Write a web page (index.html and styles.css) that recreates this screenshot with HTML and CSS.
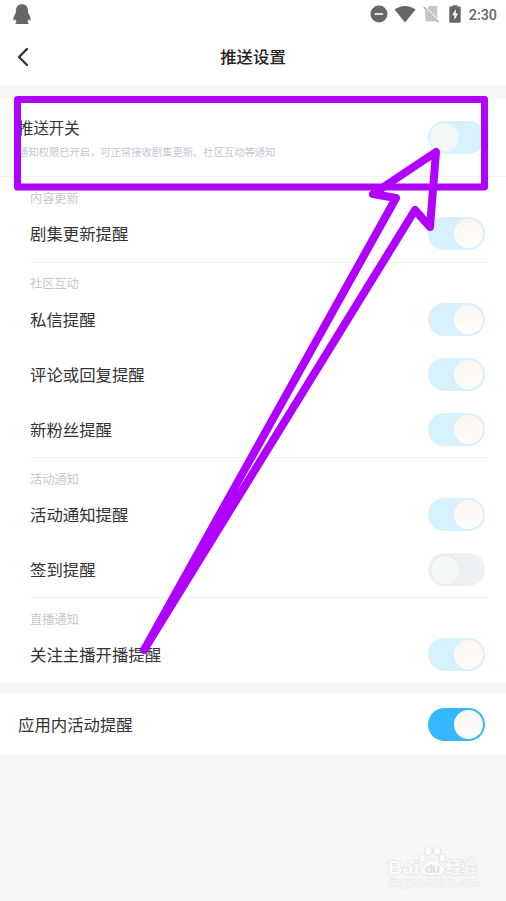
FILE: index.html
```
<!DOCTYPE html>
<html lang="zh-CN">

<head>
    <meta charset="UTF-8">
    <meta name="viewport" content="width=device-width, initial-scale=1.0">
    <title>推送设置</title>
    <link rel="stylesheet" href="styles.css">
</head>

<body>
    <header>
        <div class="status-bar">
            <svg class="penguin" width="18" height="21" viewBox="0 0 18 21">
                <path fill="#666" d="M9 .3C5.2.3 3 3 3 6.500c0 1.500-.2 2.200-.7 3.200C1.200 11.700.3 13.700.3 15.500c0 1 .5 1.400 1.200.3l.6-.8c.3 1.500.8 2.300 1.800 3.100-.9.300-1.500.7-1.500 1.300 0 .4 1 .6 2.600.6h8c1.600 0 2.600-.2 2.600-.6 0-.6-.6-1-1.500-1.300 1-.8 1.500-1.600 1.800-3.100l.6.800c.7 1.100 1.200.7 1.200-.3 0-1.800-.9-3.800-2-5.800-.5-1-.7-1.700-.7-3.200C15 3 12.800.3 9 .3z"/>
            </svg>
            <div class="status-icons">
                <svg width="18" height="18" viewBox="0 0 18 18">
                    <circle cx="9" cy="9" r="8.500" fill="#666"/>
                    <path stroke="#fff" stroke-width="1.600" d="M4.700 9h8.600"/>
                </svg>
                <svg class="wifi" width="22" height="18" viewBox="0 0 22 18">
                    <path fill="#666" d="M.5 4.500C6.500-.2 15.500-.2 21.500 4.500L11 17.500z"/>
                </svg>
                <svg class="sim" width="16" height="18" viewBox="0 0 16 18">
                    <path fill="#c6c6c6" d="M6 1h7q1.300 0 1.300 1.300v11.900L3.600 3.400zM2.200 5l11.500 11.500H3.500q-1.300 0-1.300-1.300z"/>
                    <path stroke="#fff" stroke-width="1.200" d="M2.700 2.200l12 12.800"/>
                    <path stroke="#aaa" stroke-width="1.200" d="M.7 2l14.800 15"/>
                </svg>
                <svg class="battery" width="12" height="18" viewBox="0 0 12 18">
                    <path fill="#666" d="M3.500.3h5v1.200h2.200q1 0 1 1v14.200q0 1-1 1H1.300q-1 0-1-1V2.500q0-1 1-1h2.200z"/>
                    <path fill="#fff" d="M7 4L3 10.200h2.400v4.800l3.700-6.500H6.700z"/>
                </svg>
                <span class="time">2:30</span>
            </div>
        </div>
        <div class="nav">
            <svg class="back" width="12" height="20" viewBox="0 0 12 20">
                <path fill="none" stroke="#333" stroke-width="2.400" stroke-linecap="round" stroke-linejoin="round" d="M10 2L2 10l8 8"/>
            </svg>
            <h1>推送设置</h1>
        </div>
    </header>

    <main>
        <section class="panel">
            <div class="push-row">
                <div>
                    <h2>推送开关</h2>
                    <p>通知权限已开启，可正常接收剧集更新、社区互动等通知</p>
                </div>
                <span class="switch light off"></span>
            </div>
            <div class="group first">
                <h3>内容更新</h3>
                <div class="row">剧集更新提醒<span class="switch light"></span></div>
            </div>
            <div class="group">
                <h3>社区互动</h3>
                <div class="row">私信提醒<span class="switch light"></span></div>
                <div class="row">评论或回复提醒<span class="switch light"></span></div>
                <div class="row">新粉丝提醒<span class="switch light"></span></div>
            </div>
            <div class="group">
                <h3>活动通知</h3>
                <div class="row">活动通知提醒<span class="switch light"></span></div>
                <div class="row">签到提醒<span class="switch gray off"></span></div>
            </div>
            <div class="group">
                <h3>直播通知</h3>
                <div class="row">关注主播开播提醒<span class="switch light"></span></div>
            </div>
        </section>

        <section class="panel app-panel">
            <div class="row">应用内活动提醒<span class="switch"></span></div>
        </section>
    </main>

    <svg class="watermark" width="100" height="50" viewBox="0 0 100 50">
        <g class="mark-text">
            <text x="0" y="33" font-size="19" textLength="31" lengthAdjust="spacingAndGlyphs">Bai</text>
            <text x="58" y="32" font-size="15.500" textLength="31">经验</text>
            <text class="url" x="1" y="45" font-size="10.500" textLength="90" lengthAdjust="spacingAndGlyphs">jingyan.baidu.com</text>
        </g>
        <g fill="#fafbfc" stroke="#e2e3e5">
            <path d="M44.500 18c-3 0-4.500 2-6.500 4-3 3-6 4.500-5.500 8 .7 4.500 5 4.500 12 4.500s11.300 0 12-4.500c.5-3.500-2.500-5-5.500-8-2-2-3.500-4-6.500-4z"/>
            <ellipse cx="34.500" cy="17" rx="3.300" ry="4.200"/>
            <ellipse cx="40.500" cy="10" rx="3.600" ry="4.800"/>
            <ellipse cx="49" cy="10" rx="3.600" ry="4.800"/>
            <ellipse cx="54.500" cy="17" rx="3.300" ry="4.200"/>
        </g>
        <text class="du" x="37" y="32" font-size="13" textLength="15">du</text>
    </svg>

    <svg class="marker" width="506" height="901" viewBox="0 0 506 901">
        <rect x="17.500" y="99.500" width="467" height="87.500"/>
        <path d="M144 650L396 198L373 194L436 152L430 227L415 210Z"/>
    </svg>
</body>

</html>
```
FILE: styles.css
```
* {
    margin: 0;
    padding: 0;
    box-sizing: border-box;
}

body {
    position: relative;
    height: 901px;
    overflow: hidden;
    background-color: #f5f6f8;
    color: #333;
    font-family: "Noto Sans CJK SC", sans-serif;
    font-size: 16.4px;
}

svg {
    display: block;
}

header {
    height: 86px;
    background-color: #fff;
}

.status-bar {
    display: flex;
    align-items: center;
    justify-content: space-between;
    height: 28px;
    padding: 0 9px 0 12.5px;
}

.status-icons {
    display: flex;
    align-items: center;
}

.wifi {
    margin-left: 6px;
}

.sim {
    margin-left: 7px;
}

.battery {
    margin-left: 10px;
}

.time {
    margin-left: 8px;
    padding-top: 2px;
    color: #666;
    font-family: Roboto, sans-serif;
    font-size: 14.3px;
    font-weight: 500;
    line-height: 28px;
}

.nav {
    display: grid;
    grid-template-columns: 1fr auto 1fr;
    align-items: center;
    height: 58px;
    padding: 0 17px;
}

.nav h1 {
    padding-bottom: 2px;
    color: #222;
    font-size: 16.4px;
    font-weight: 500;
}

main {
    display: flex;
    flex-direction: column;
    gap: 12px;
    padding-top: 12px;
}

.panel {
    background-color: #fff;
}

.push-row {
    display: flex;
    align-items: center;
    justify-content: space-between;
    height: 79px;
    padding: 0 21px 0 18px;
    border-bottom: 1px solid #f3f3f5;
}

.push-row h2 {
    padding-top: 2px;
    font-size: 15.4px;
    font-weight: 400;
    line-height: 26px;
}

.push-row p {
    color: #c3c8d1;
    font-size: 10.3px;
    line-height: 23px;
}

.group {
    margin: 0 18px 0 30px;
}

.group h3 {
    height: 30px;
    padding-top: 12px;
    border-top: 1px solid #f3f3f5;
    color: #c3c8d1;
    font-size: 12.2px;
    font-weight: 400;
    line-height: 18px;
}

.group.first h3 {
    border-top: none;
}

.group.first + .group h3 {
    padding-top: 11px;
}

.row {
    display: flex;
    align-items: flex-start;
    justify-content: space-between;
    height: 55px;
    padding-right: 3px;
    line-height: 54px;
}

.row .switch {
    margin-top: 11px;
}

.first .row {
    line-height: 52px;
}

.first .row .switch {
    margin-top: 10px;
}

.app-panel .row {
    height: 61px;
    padding: 0 21px 0 18px;
    line-height: 60px;
}

.app-panel .row .switch {
    margin-top: 14px;
}

.switch {
    display: flex;
    justify-content: flex-end;
    width: 57px;
    height: 33px;
    padding: 2px;
    border-radius: 17px;
    background-color: #35b8ff;
}

.switch::before {
    content: "";
    width: 29px;
    height: 29px;
    border-radius: 50%;
    background: linear-gradient(#fdf6ee, #fefdfb);
}

.switch.light {
    background-color: #d8f1ff;
}

.switch.gray {
    background-color: #edf1f4;
}

.switch.off {
    justify-content: flex-start;
}

.switch.off::before {
    background: #f3f7f8;
}

.switch.gray::before {
    border: 1px solid #e6eaec;
}

.watermark {
    position: absolute;
    left: 388px;
    top: 841px;
}

.mark-text {
    fill: #fafbfc;
    stroke: #e2e3e5;
    stroke-width: 1.4px;
    paint-order: stroke;
    font-family: "Liberation Sans", "Noto Sans CJK SC", sans-serif;
    font-weight: bold;
}

.mark-text .url {
    stroke: #e8e9eb;
    font-weight: normal;
}

.du {
    fill: #dedfe1;
    font-family: "Liberation Sans", sans-serif;
    font-weight: bold;
}

.marker {
    position: absolute;
    left: 0;
    top: 0;
    fill: none;
    stroke: #b000ff;
    stroke-width: 7px;
    stroke-linejoin: round;
}

.marker path {
    stroke-width: 8px;
}
```
